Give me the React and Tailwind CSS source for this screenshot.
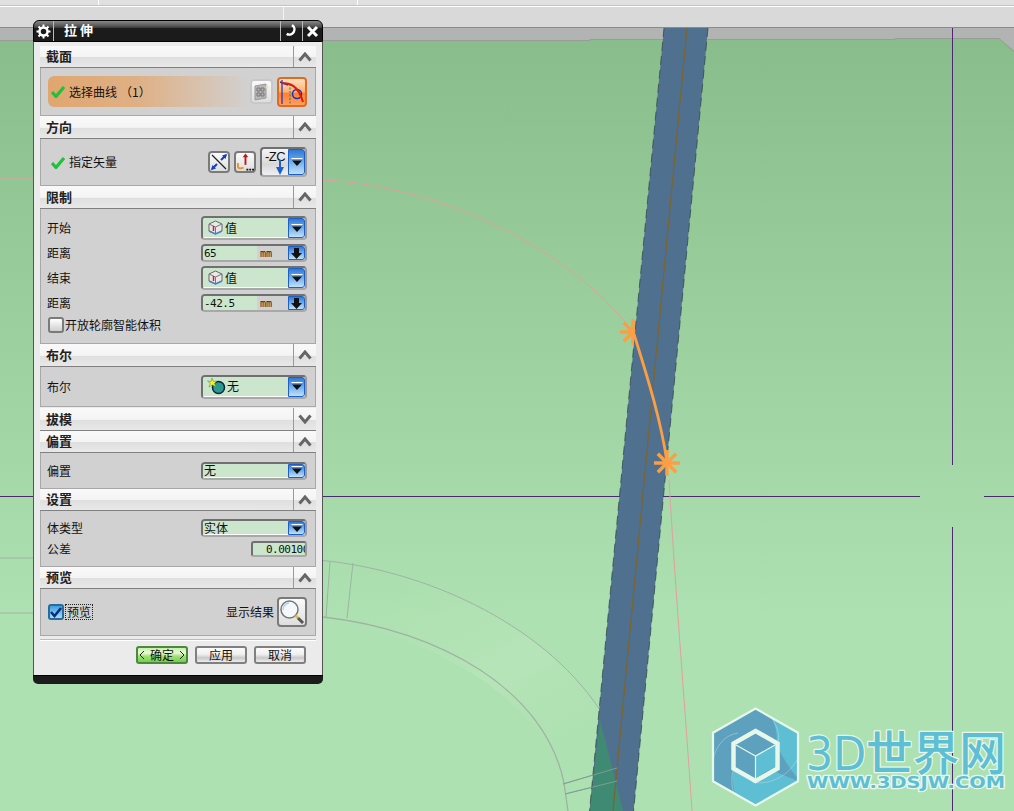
import React from "react";

const CJK = { fontFamily: '"Noto Sans CJK SC", "Liberation Sans", sans-serif' };
const SUNKEN = "border-2 border-[#707070] border-b-[#a8a8a8] border-r-[#9a9a9a]";

function Chevron({ up = true }) {
  return (
    <svg width="14" height="10" viewBox="0 0 14 10" className="block">
      <polyline points={up ? "1.5,8.5 7,2 12.5,8.5" : "1.5,1.5 7,8 12.5,1.5"} fill="none" stroke="#666" strokeWidth="3" />
    </svg>
  );
}

function Section({ title, up = true, headClass = "h-[22px]", bodyClass, children }) {
  return (
    <div className="w-[276px]">
      <div className={`${headClass} flex items-stretch border-b border-[#808080] bg-[linear-gradient(#f9f9f9_0%,#f4f4f4_52%,#dfdfdf_54%,#e8e8e8_100%)]`}>
        <div className="flex-1 pl-[6px] pb-[2px] flex items-center text-[13px] font-bold leading-none text-[#222]">{title}</div>
        <div className="w-[23px] border-l border-[#9a9a9a] flex items-center justify-center"><Chevron up={up} /></div>
      </div>
      {children && (
        <div className={`${bodyClass} bg-[#d1d1d1] border-x border-b border-[#a8a8a8] pl-[7px] pr-[8px] text-[12px] leading-none text-[#111]`}>{children}</div>
      )}
    </div>
  );
}

function Arrow({ down = false }) {
  return (
    <div className="w-[17px] self-stretch rounded-r-[3px] border border-[#1f5fc4] bg-[linear-gradient(#2f78d8_0%,#6aaaea_45%,#c0e0fa_100%)] flex items-center justify-center">
      {down ? (
        <svg width="13" height="13" viewBox="0 0 13 13"><path d="M4 1h5v5h3L6.500 12 1 6h3z" fill="#111" /></svg>
      ) : (
        <svg width="12" height="9" viewBox="0 0 12 9"><path d="M0.500 0.500h11" stroke="#fff" /><path d="M1 2.500h10L6 8z" fill="#111" /></svg>
      )}
    </div>
  );
}

function CubeIcon() {
  return (
    <svg width="15" height="15" viewBox="0 0 15 15" className="mr-[2px] ml-[4px] shrink-0">
      <path d="M7.500 1L14 4v7l-6.500 3L1 11V4z" fill="#e8e8e8" stroke="#666" />
      <path d="M1 4l6.500 3L14 4M7.500 7v7" fill="none" stroke="#777" />
      <path d="M1 11l6.500 3L14 11" fill="none" stroke="#4a7fd0" strokeWidth="1.500" />
      <path d="M5.500 6v5" stroke="#d02020" strokeWidth="1.500" />
    </svg>
  );
}

function BoolIcon() {
  return (
    <svg width="19" height="18" viewBox="0 0 19 18" className="ml-[3px] mr-[1px] shrink-0">
      <circle cx="11.500" cy="10.500" r="6" fill="#2a9a90" stroke="#123" strokeWidth="1.500" />
      <path d="M5 1l1.500 3.500L10 4 7.500 6.500 9 10 5.500 8 2 10l1.300-3.500L0.500 4l3.500.500z" fill="#f5f02a" stroke="#2a8a60" strokeWidth="0.500" />
    </svg>
  );
}

function Combo({ icon, text, h = "h-[24px]" }) {
  return (
    <div className={`${h} w-[106px] flex items-stretch rounded-[4px] ${SUNKEN} bg-[#f2f2f2] overflow-hidden`}>
      <div className="flex-1 flex items-center bg-[#cbe6cc] pl-[1px] border-b border-white text-[12px] leading-none text-[#111]">
        {icon}<span>{text}</span>
      </div>
      <Arrow />
    </div>
  );
}

function Distance({ value }) {
  return (
    <div className={`h-[18px] w-[106px] flex items-stretch rounded-[4px] ${SUNKEN} bg-[#d1d1d1] overflow-hidden`}>
      <div className="w-[54px] bg-[#cbe6cc] pl-[1px] flex items-center text-[11px] tracking-[-0.5px] leading-none text-[#111] [font-family:'DejaVu_Sans_Mono',monospace]">{value}</div>
      <div className="flex-1 flex items-center pl-[3px] pt-[2px] text-[10px] leading-none text-[#222] [font-family:'DejaVu_Sans_Mono',monospace]">mm</div>
      <Arrow down />
    </div>
  );
}

function Row({ label, children, className = "" }) {
  return (
    <div className={`flex items-center justify-between ${className}`}>
      <span className="-ml-[1px]">{label}</span>
      {children}
    </div>
  );
}

function Check() {
  return (
    <svg width="14" height="13" viewBox="0 0 14 13" className="shrink-0">
      <path d="M1 7l4 4.500L13 2" fill="none" stroke="#1fc23a" strokeWidth="3.200" />
    </svg>
  );
}

function IconButton({ className, children }) {
  return (
    <div className={`${className} shrink-0 rounded-[4px] border-2 border-[#7a7a7a] bg-[linear-gradient(#fafafa,#dedede)] flex items-center justify-center`}>{children}</div>
  );
}

function DialogButton({ children, green = false }) {
  return (
    <div className={`w-[52px] h-[18px] rounded-[3px] border-2 ${green ? "border-[#4a8a3a] bg-[linear-gradient(#c8f0a8_0%,#e8f8d8_35%,#a0e070_60%,#70d050_100%)]" : "border-[#808080] bg-[linear-gradient(#fbfbfb_0%,#f0f0f0_45%,#c8c8c8_70%,#ececec_100%)]"} flex items-center justify-center text-[12px] leading-none text-[#111]`}>
      {children}
    </div>
  );
}

function Dialog() {
  return (
    <div style={CJK} className="absolute left-[33px] top-[20px] w-[290px] h-[664px] flex flex-col">
      <div className="h-[22px] shrink-0 flex items-stretch rounded-t-[6px] border-y border-black border-x bg-[linear-gradient(#888_0%,#555_25%,#3a3a3a_34%,#1b1b1b_36%,#1b1b1b_100%)] text-white">
        <div className="w-[20px] border-r border-[#bbb] flex items-center justify-center">
          <svg width="15" height="15" viewBox="0 0 15 15">
            <circle cx="7.500" cy="7.500" r="4" fill="none" stroke="#fff" strokeWidth="2.500" />
            <path d="M7.500 0.500v3M7.500 11.500v3M0.500 7.500h3M11.500 7.500h3M2.500 2.500l2 2M10.500 10.500l2 2M12.500 2.500l-2 2M4.500 10.500l-2 2" stroke="#fff" strokeWidth="2" />
          </svg>
        </div>
        <div className="flex-1 pl-[10px] pb-[3px] flex items-center text-[13px] font-bold tracking-[3px] leading-none">拉伸</div>
        <div className="w-[22px] border-l border-[#bbb] flex items-center justify-center">
          <svg width="14" height="14" viewBox="0 0 14 14"><path d="M5 1.500A5 5 0 1 1 3 11.500" transform="rotate(20 7 7)" fill="none" stroke="#fff" strokeWidth="2.500" /></svg>
        </div>
        <div className="w-[20px] border-l border-[#bbb] flex items-center justify-center">
          <svg width="13" height="13" viewBox="0 0 13 13"><path d="M2 2l9 9M11 2l-9 9" stroke="#fff" strokeWidth="3" /></svg>
        </div>
      </div>

      <div className="flex-1 bg-[#ebebeb] border-x border-[#555] flex flex-col items-center pt-[4px]">
        <Section title="截面" bodyClass="h-[48px] flex items-center">
          <div className="w-[202px] h-[31px] rounded-l-[6px] bg-[linear-gradient(90deg,#e0a670_0%,#dfb085_45%,#d1d1d1_100%)] flex items-center pl-[3px] gap-[4px] text-[12px]">
            <Check />
            <span>选择曲线<span className="ml-[3px]">（1）</span></span>
          </div>
          <IconButton className="w-[23px] h-[25px] !border-[#c8c8c8]">
            <svg width="16" height="18" viewBox="0 0 16 18"><path d="M1 3l11-2v14L1 17z" fill="#b8b8b8" stroke="#999" /><path d="M3 5h3v3H3zM7 5h3v3H7zM3 10h3v3H3zM7 10h3v3H7z" fill="none" stroke="#777" /><path d="M13 2l1 1.500 1.500.500-1.500.500-1 1.500-1-1.500-1.500-.500 1.500-.500z" fill="#f0e8a0" /></svg>
          </IconButton>
          <IconButton className="ml-[4px] w-[30px] h-[30px] !border-[#e06a20] !bg-[linear-gradient(#ffe0c0_0%,#ffb070_50%,#ff8030_55%,#ffa060_100%)]">
            <svg width="26" height="26" viewBox="0 0 26 26">
              <path d="M1 3l8 3" stroke="#1a30c0" strokeWidth="1.500" />
              <path d="M3 1v24" stroke="#1a30c0" strokeWidth="1.200" />
              <path d="M11 5v20" stroke="#208060" strokeWidth="1" strokeDasharray="2 1.500" />
              <circle cx="18" cy="15" r="4.500" fill="none" stroke="#1a30c0" strokeWidth="1.500" />
              <path d="M2 4c9 0 17 2 22 19" fill="none" stroke="#d02010" strokeWidth="2" />
            </svg>
          </IconButton>
        </Section>

        <Section title="方向" headClass="h-[23px]" bodyClass="h-[47px] flex items-center">
          <div className="flex-1 flex items-center pl-[3px] gap-[4px]">
            <Check />
            <span>指定矢量</span>
          </div>
          <IconButton className="w-[22px] h-[22px]">
            <svg width="18" height="18" viewBox="0 0 18 18"><path d="M2 2l14 14" stroke="#222" strokeWidth="1.200" /><path d="M2 16l5-5M16 2l-5 5" stroke="#1440c8" strokeWidth="2" /><path d="M1 17l1.500-5 3.500 3.500zM17 1l-1.500 5L12 2.500z" fill="#1440c8" /></svg>
          </IconButton>
          <IconButton className="ml-[4px] w-[22px] h-[22px]">
            <svg width="19" height="19" viewBox="0 0 19 19"><path d="M10 3v9" stroke="#c01818" strokeWidth="2" /><path d="M10 0l3 4H7z" fill="#c01818" /><path d="M2 10v4c0 2 3 2 6 1" fill="none" stroke="#f09020" strokeWidth="2" /><path d="M11 17h2M14 17h2M17 17h2" stroke="#111" strokeWidth="2" /></svg>
          </IconButton>
          <div className={`ml-[4px] w-[47px] h-[30px] rounded-[4px] ${SUNKEN} bg-[linear-gradient(#f4f4f4,#d8d8d8_60%,#f0f0f0)] flex items-stretch overflow-hidden`}>
            <div className="flex-1 relative flex justify-center">
              <span className="pt-[1px] text-[13px] leading-none tracking-[-0.5px] [font-family:'Liberation_Sans',sans-serif]">-ZC</span>
              <svg width="8" height="15" viewBox="0 0 8 15" className="absolute left-[14px] bottom-0"><path d="M4 0v9" stroke="#1a60d0" strokeWidth="2" /><path d="M0 7h8l-4 8z" fill="#1a60d0" /></svg>
            </div>
            <Arrow />
          </div>
        </Section>

        <Section title="限制" headClass="h-[23px]" bodyClass="h-[135px] flex flex-col pt-[7px]">
          <Row label="开始"><Combo icon={<CubeIcon />} text="值" /></Row>
          <Row label="距离" className="mt-[4px]"><Distance value="65" /></Row>
          <Row label="结束" className="mt-[4px]"><Combo icon={<CubeIcon />} text="值" /></Row>
          <Row label="距离" className="mt-[4px]"><Distance value="-42.5" /></Row>
          <div className="mt-[5px] flex items-center gap-[1px]">
            <div className="w-[16px] h-[16px] rounded-[3px] border-2 border-[#7a7a7a] bg-[linear-gradient(#fff,#cfcfcf)]" />
            <span className="text-[12px]">开放轮廓智能体积</span>
          </div>
        </Section>

        <Section title="布尔" headClass="h-[23px]" bodyClass="h-[40px] flex flex-col justify-center">
          <Row label="布尔"><Combo icon={<BoolIcon />} text="无" /></Row>
        </Section>

        <div className="h-px shrink-0" />
        <Section title="拔模" up={false} headClass="h-[23px]" />
        <Section title="偏置" headClass="h-[22px]" bodyClass="h-[36px] flex flex-col justify-center">
          <Row label="偏置"><Combo text="无" h="h-[18px]" /></Row>
        </Section>

        <Section title="设置" headClass="h-[22px]" bodyClass="h-[56px] flex flex-col pt-[8px]">
          <Row label="体类型"><Combo text="实体" h="h-[18px]" /></Row>
          <Row label="公差" className="mt-[4px]">
            <div className={`w-[56px] h-[16px] rounded-[3px] ${SUNKEN} bg-[#cbe6cc] overflow-hidden whitespace-nowrap pl-[13px] pt-[1px] text-[11px] tracking-[-0.5px] leading-none [font-family:'DejaVu_Sans_Mono',monospace]`}>0.00100</div>
          </Row>
        </Section>

        <Section title="预览" headClass="h-[22px]" bodyClass="h-[47px] flex items-center justify-between">
          <div className="flex items-center gap-[1px]">
            <div className="w-[16px] h-[16px] rounded-[3px] border-2 border-[#2a6a9a] bg-[linear-gradient(#40a0e0,#a0e0f5)] flex items-center justify-center">
              <svg width="12" height="12" viewBox="0 0 12 12"><path d="M1 6l3.500 4L11 2" fill="none" stroke="#0c2a80" strokeWidth="2.500" /></svg>
            </div>
            <span className="border border-dotted border-[#222] px-[1px] py-[1px]">预览</span>
          </div>
          <div className="flex items-center gap-[3px]">
            <span>显示结果</span>
            <IconButton className="w-[30px] h-[30px]">
              <svg width="26" height="26" viewBox="0 0 26 26">
                <circle cx="10.500" cy="10.500" r="8.500" fill="#f4f8fc" stroke="#777" strokeWidth="1.500" />
                <path d="M4 11a7 7 0 0 1 6-7" fill="none" stroke="#b8d0ea" strokeWidth="1.500" />
                <path d="M16.500 16.500l2.500 2.500" stroke="#e0c040" strokeWidth="3" />
                <path d="M19 19l5 5" stroke="#555" strokeWidth="3" />
              </svg>
            </IconButton>
          </div>
        </Section>

        <div className="w-[276px] h-[2px] mt-[3px] border-t border-[#bdbdbd] bg-white" />
        <div className="w-[276px] flex justify-end gap-[7px] pr-[10px] mt-[5px]">
          <DialogButton green>
            <span className="flex w-full items-center justify-between px-[1px]">
              <svg width="6" height="10" viewBox="0 0 6 10"><path d="M5 1L1 5l4 4" fill="none" stroke="#222" /></svg>
              确定
              <svg width="6" height="10" viewBox="0 0 6 10"><path d="M1 1l4 4-4 4" fill="none" stroke="#222" /></svg>
            </span>
          </DialogButton>
          <DialogButton>应用</DialogButton>
          <DialogButton>取消</DialogButton>
        </div>
      </div>

      <div className="h-[9px] shrink-0 rounded-b-[5px] bg-[#1c1c1c] border-t border-black" />
    </div>
  );
}

function Star({ cx, cy, r = 14, clip }) {
  const lines = [0, 45, 90, 135].map((a) => {
    const dx = Math.cos((a * Math.PI) / 180) * r;
    const dy = Math.sin((a * Math.PI) / 180) * r;
    return <line key={a} x1={cx - dx} y1={cy - dy} x2={cx + dx} y2={cy + dy} />;
  });
  return <g stroke="#fb9f45" strokeWidth="3.500" clipPath={clip}>{lines}</g>;
}

function Scene() {
  const hex = (cx, cy, rx, ry) =>
    `${cx},${cy - ry} ${cx + rx},${cy - ry / 2} ${cx + rx},${cy + ry / 2} ${cx},${cy + ry} ${cx - rx},${cy + ry / 2} ${cx - rx},${cy - ry / 2}`;
  return (
    <svg viewBox="0 28 1014 783" width="1014" height="783" className="absolute inset-0 block">
      <defs>
        <clipPath id="leftOfStrip"><polygon points="560,300 636.500,300 634,345 560,345" /></clipPath>
        <linearGradient id="band" x1="0.300" y1="0" x2="0.900" y2="0.900">
          <stop offset="0" stopColor="#aee0b0" stopOpacity="0" />
          <stop offset="0.550" stopColor="#bfe9c1" stopOpacity="0.450" />
          <stop offset="1" stopColor="#aee0b0" stopOpacity="0" />
        </linearGradient>
      </defs>

      <polygon points="0,28 1014,28 1014,50 999,38 895,38 895,39 590,39 590,40 0,40" fill="#b2b3b3" />
      <polyline points="0,40.500 590,40.500 590,39.500 895,39.500 895,38.500 999,38.500 1014,52" fill="none" stroke="#9a9a9a" />

      <path d="M323 561C420 570 540 620 600 710L592 790 564 783C540 700 440 640 323 617z" fill="url(#band)" />
      <g fill="none" stroke="#9fb3a3" strokeWidth="1">
        <path d="M323 560.500C420 570 540 620 600 710" />
        <path d="M323 617C440 630 545 690 564 783L568 811" strokeWidth="1.300" />
        <path d="M330 562L326 617M353 563L347 618" />
        <path d="M563 784L617 768M565 794L617 781" />
        <path d="M0 558H34M0 613H34" />
      </g>

      <g stroke="#4d2a70" strokeWidth="1">
        <path d="M0 496.500H920M984 496.500H1014" />
        <path d="M952.500 28V465M952.500 527V811" />
      </g>

      <g fill="none" stroke="#e0a0a0" strokeWidth="1">
        <path d="M0 179H34M323 180C430 185 560 240 630 328" />
        <path d="M669 480C676 600 686 720 692 811" />
      </g>

      <polygon points="664,28 708,28 633.600,811 589.500,811" fill="#50708f" />
      <polygon points="600,720 623,811 590,811" fill="#3f8a72" />
      <line x1="664" y1="28" x2="589.500" y2="811" stroke="#2f3f40" strokeWidth="1" strokeOpacity="0.700" strokeDasharray="9 5" />
      <line x1="708" y1="28" x2="633.600" y2="811" stroke="#2f3f40" strokeWidth="1" strokeOpacity="0.700" strokeDasharray="9 5" />
      <line x1="687" y1="28" x2="613" y2="811" stroke="#7a6530" strokeWidth="1.300" />
      <line x1="563" y1="784" x2="617" y2="768" stroke="#7aa090" />
      <line x1="565" y1="794" x2="617" y2="781" stroke="#7aa090" />

      <path d="M634 334C645 370 660 415 667 462" fill="none" stroke="#fb9f45" strokeWidth="2.800" />
      <Star cx={633} cy={332} r={13} clip="url(#leftOfStrip)" />
      <Star cx={667} cy={463} r={13} />

      <g opacity="0.96">
        <polygon points={hex(755.500, 757, 42.500, 48.500)} fill="#5a9fc0" />
        <path d="M771 717L798 733V778C790 770 782 756 776 744 778 735 776 726 771 717z" fill="#5bbdd6" />
        <path d="M733 770L755 783 776 772 798 781 755 805 735 793C733 786 732 778 733 770z" fill="#5bbdd6" />
        <g fill="none" stroke="#cfeee0" strokeWidth="0.500" strokeOpacity="0.800">
          <path d="M771 717C780 730 780 740 776 746M713 760C716 745 725 735 738 733M733 770C730 785 733 795 738 797M752 782C770 786 790 775 798 758" />
        </g>
        <polygon points={hex(755.500, 756, 22, 25)} fill="#5a9fc0" stroke="#eaf9ee" strokeWidth="4.500" />
        <polygon points="755.500,756 775,745 775,767 755.500,778" fill="#5bbdd6" />
        <path d="M736 745L755.500 756 775 745M755.500 756V780" fill="none" stroke="#eaf9ee" strokeWidth="1.200" />
        <polygon points={hex(755.500, 757, 42.500, 48.500)} fill="none" stroke="#eaf9ee" strokeWidth="2.200" />

        <g fill="#5bbdd6" stroke="#eaf9ee" strokeWidth="2.500" strokeLinejoin="round" style={{ paintOrder: "stroke" }}>
          <text x="806" y="770" fontSize="46" fontWeight="500" textLength="60" lengthAdjust="spacingAndGlyphs" fontFamily="'DejaVu Sans', sans-serif">3D</text>
          <text x="866" y="770" fontSize="47" fontWeight="500" textLength="140" lengthAdjust="spacingAndGlyphs" fontFamily="'Noto Sans CJK SC', sans-serif">世界网</text>
          <text x="807" y="788" fontSize="15" fontWeight="700" textLength="198" lengthAdjust="spacingAndGlyphs" fontFamily="'DejaVu Sans', sans-serif">WWW.3DSJW.COM</text>
        </g>
      </g>
    </svg>
  );
}

export default function App() {
  return (
    <div className="relative w-[1014px] h-[811px] overflow-hidden flex flex-col bg-[#aee0b0]">
      <div className="h-[28px] shrink-0 flex flex-col bg-[#d9d9d9]">
        <div className="h-[5px] flex bg-[#e0e0e0]">
          <div className="w-[99px] border-r border-white" />
          <div className="w-[259px] border-r border-white" />
        </div>
        <div className="h-[2px] bg-[#c4c4c4] border-b border-white" />
        <div className="flex-1 flex border-b border-[#8a8a8a]">
          <div className="w-[284px] border-r border-[#f4f4f4]" />
        </div>
      </div>
      <div className="flex-1 relative bg-[linear-gradient(#88bd8b_0%,#aee1b1_75%,#aee1b1_100%)]">
        <Scene />
      </div>
      <Dialog />
    </div>
  );
}
